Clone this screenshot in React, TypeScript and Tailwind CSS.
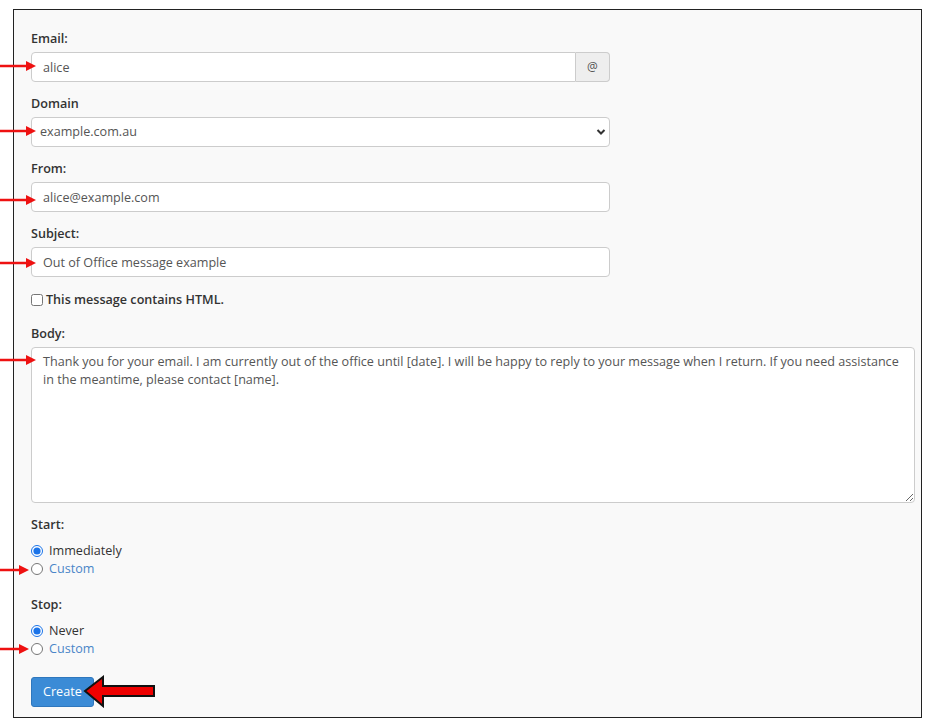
import React from "react";

function Arrow({ className, w = 36 }: { className: string; w?: number }) {
	return (
		<svg className={`absolute left-0 ${className}`} width={w} height="12" viewBox={`0 0 ${w} 12`}>
			<line x1="0" y1="6" x2={w - 8} y2="6" stroke="#ee1111" strokeWidth="2.5" />
			<polygon points={`${w - 10},1 ${w},6 ${w - 10},11`} fill="#ee1111" />
		</svg>
	);
}

const label = "block text-[12.6px] leading-5 font-semibold text-[#333] mb-[3px]";
const input =
	"h-[30px] w-full rounded-[4px] border border-[#ccc] bg-white px-[11px] text-[12.6px] text-[#555] outline-none";

export default function App() {
	return (
		<div className="relative h-[727px] w-[930px] bg-white pt-[9px] font-['Open_Sans',sans-serif]">
			<div className="ml-[13px] h-[709px] w-[909px] border border-[#222] bg-[#f9f9f9] pl-[17px] pr-[6px] pt-[19px]">
				<div className="w-[579px]">
					<label className={label}>Email:</label>
					<div className="flex">
						<input className={`${input} rounded-r-none`} defaultValue="alice" />
						<span className="flex h-[30px] w-[34px] shrink-0 items-center justify-center rounded-r-[4px] border border-l-0 border-[#ccc] bg-[#eee] text-[12px] text-[#555]">
							@
						</span>
					</div>

					<label className={`${label} mt-[12px]`}>Domain</label>
					<div className="relative">
						<select className={`${input} appearance-none pl-[8px]`} defaultValue="example.com.au">
							<option>example.com.au</option>
						</select>
						<svg className="pointer-events-none absolute right-[4px] top-[11px]" width="10" height="8" viewBox="0 0 10 8">
							<path d="M1.5 2 L5 5.5 L8.5 2" fill="none" stroke="#333" strokeWidth="2" />
						</svg>
					</div>

					<label className={`${label} mt-[12px]`}>From:</label>
					<input className={input} defaultValue="alice@example.com" />

					<label className={`${label} mt-[12px]`}>Subject:</label>
					<input className={input} defaultValue="Out of Office message example" />
				</div>

				<label className="mt-[13px] flex items-center gap-[3px] text-[12.6px] leading-5 font-semibold text-[#333]">
					<input type="checkbox" className="m-0 h-[12px] w-[12px]" />
					This message contains HTML.
				</label>

				<label className={`${label} mt-[14px]`}>Body:</label>
				<textarea
					className="block h-[156px] w-full rounded-[4px] border border-[#ccc] bg-white px-[11px] py-[5px] text-[12.6px] leading-[18px] text-[#555] outline-none"
					defaultValue="Thank you for your email. I am currently out of the office until [date]. I will be happy to reply to your message when I return. If you need assistance in the meantime, please contact [name]."
				/>

				<label className={`${label} mt-[12px]`}>Start:</label>
				<div className="mt-[7px] flex flex-col text-[12.6px] leading-[18px]">
					<label className="flex items-center gap-[6px] text-[#333]">
						<input type="radio" name="start" defaultChecked className="m-0 h-[12px] w-[12px] accent-[#1a73e8]" />
						Immediately
					</label>
					<label className="flex items-center gap-[6px] text-[#4a86c8]">
						<input type="radio" name="start" className="m-0 h-[12px] w-[12px]" />
						Custom
					</label>
				</div>

				<label className={`${label} mt-[17px]`}>Stop:</label>
				<div className="mt-[7px] flex flex-col text-[12.6px] leading-[18px]">
					<label className="flex items-center gap-[6px] text-[#333]">
						<input type="radio" name="stop" defaultChecked className="m-0 h-[12px] w-[12px] accent-[#1a73e8]" />
						Never
					</label>
					<label className="flex items-center gap-[6px] text-[#4a86c8]">
						<input type="radio" name="stop" className="m-0 h-[12px] w-[12px]" />
						Custom
					</label>
				</div>

				<button className="mt-[19px] h-[30px] rounded-[3px] border border-[#2f77bd] bg-[#3b8bd6] px-[11px] text-[12.6px] text-white">
					Create
				</button>
			</div>

			<Arrow className="top-[60px]" />
			<Arrow className="top-[125px]" />
			<Arrow className="top-[194px]" />
			<Arrow className="top-[257px]" />
			<Arrow className="top-[354px]" />
			<Arrow className="top-[564px]" w={29} />
			<Arrow className="top-[643px]" w={29} />

			<svg className="absolute left-[83px] top-[675px]" width="74" height="33" viewBox="0 0 74 33">
				<polygon points="2,16 20,2 20,11 71,11 71,21 20,21 20,31" fill="#ee0000" stroke="#111" strokeWidth="2" strokeLinejoin="miter" />
			</svg>
		</div>
	);
}
